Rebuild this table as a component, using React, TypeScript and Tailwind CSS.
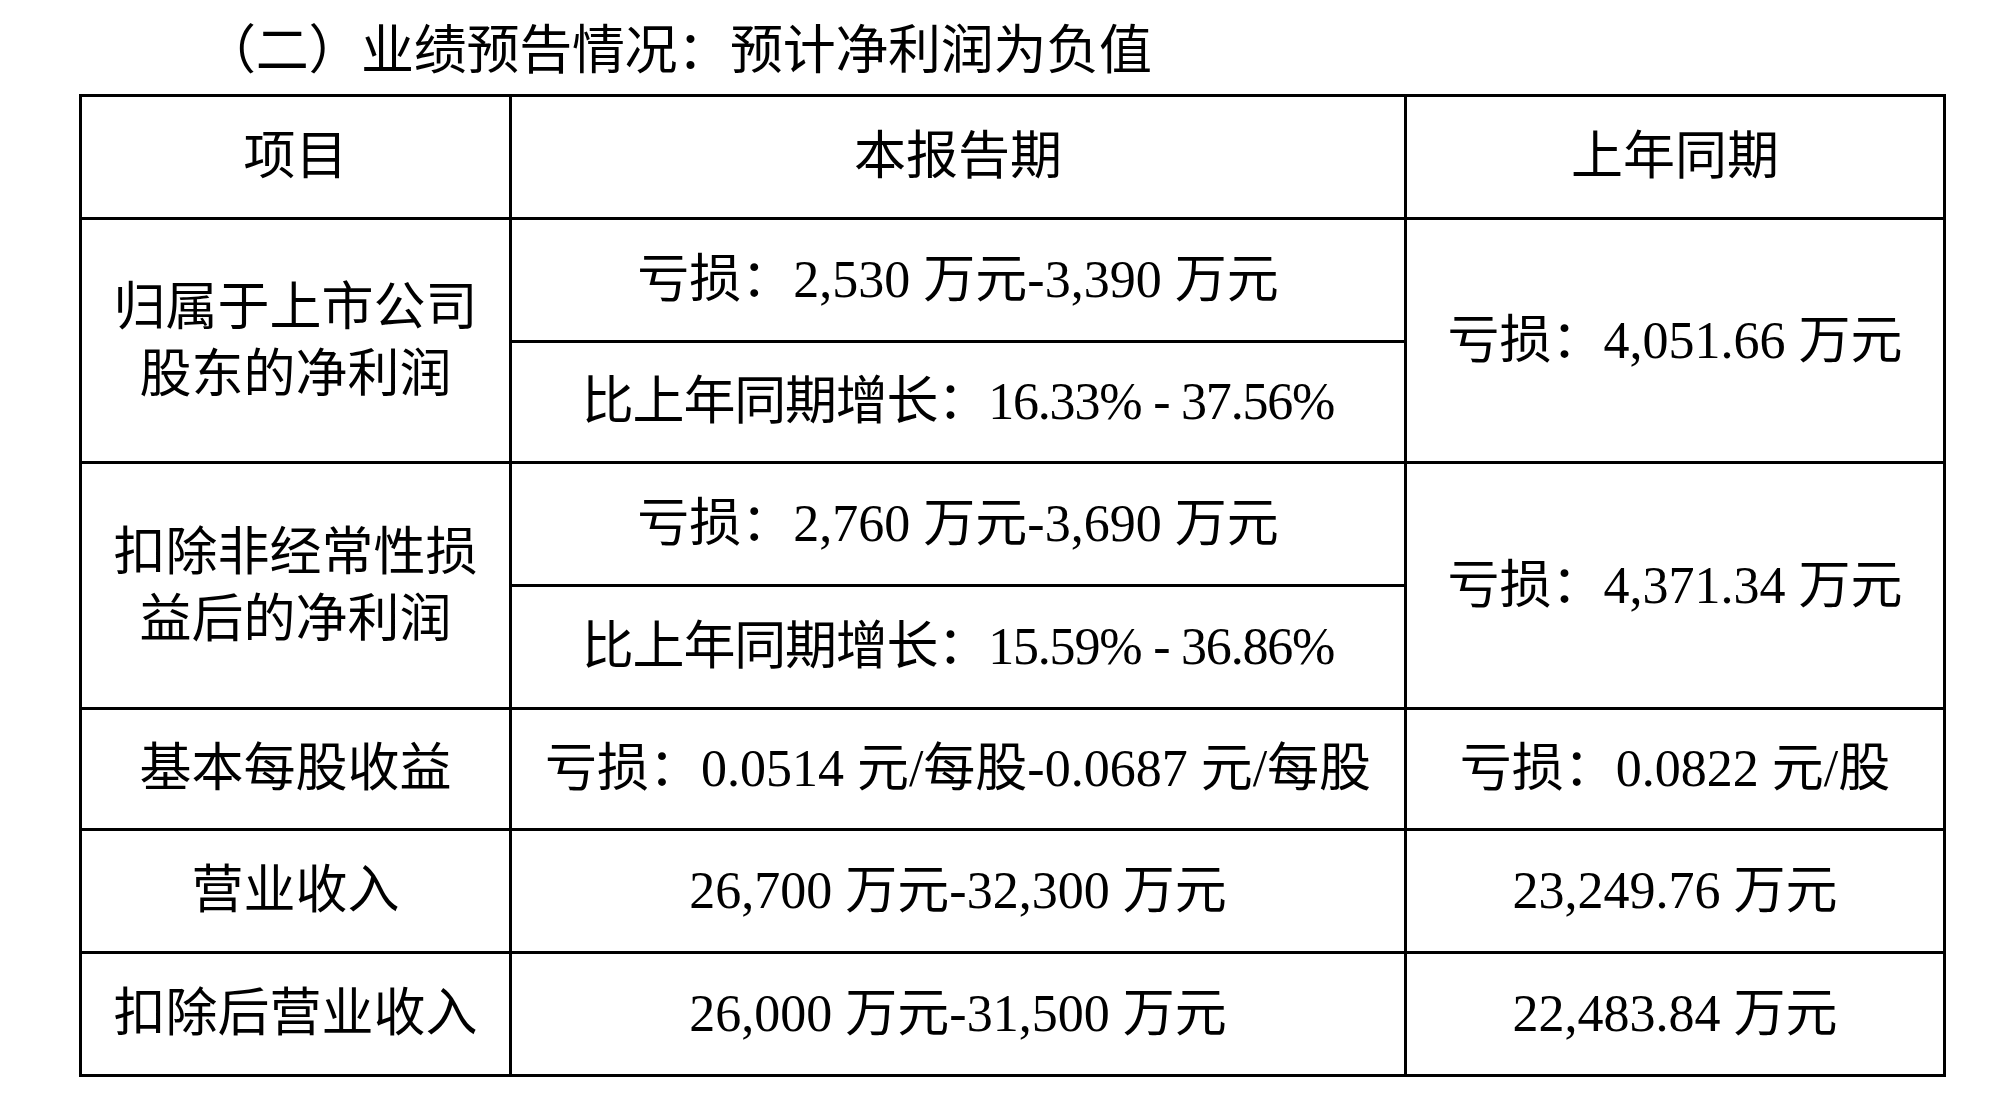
export default function App() {
  const cell = 'border-[3px] border-black text-center align-middle p-0'
  return (
    <div className="min-h-screen bg-white text-black font-['Liberation_Serif','Noto_Sans_CJK_SC',serif] text-[52px] leading-none">
      <div className="h-[94px] pl-[203px] pt-[8px] flex items-center text-[53px] tracking-[-0.3px]">
        （二）业绩预告情况：预计净利润为负值
      </div>
      <table className="ml-[79px] border-collapse table-fixed w-[1864px]">
        <colgroup>
          <col className="w-[430px]" />
          <col className="w-[895px]" />
          <col className="w-[539px]" />
        </colgroup>
        <tbody>
          <tr className="h-[123px]">
            <td className={cell}>项目</td>
            <td className={cell}>本报告期</td>
            <td className={cell}>上年同期</td>
          </tr>
          <tr className="h-[123px]">
            <td rowSpan={2} className={`${cell} leading-[67px]`}>
              <div>归属于上市公司</div>
              <div>股东的净利润</div>
            </td>
            <td className={cell}>亏损：2,530 万元-3,390 万元</td>
            <td rowSpan={2} className={cell}>亏损：4,051.66 万元</td>
          </tr>
          <tr className="h-[121px]">
            <td className={`${cell} tracking-[-1.2px]`}>比上年同期增长：16.33% - 37.56%</td>
          </tr>
          <tr className="h-[123px]">
            <td rowSpan={2} className={`${cell} leading-[67px]`}>
              <div>扣除非经常性损</div>
              <div>益后的净利润</div>
            </td>
            <td className={cell}>亏损：2,760 万元-3,690 万元</td>
            <td rowSpan={2} className={cell}>亏损：4,371.34 万元</td>
          </tr>
          <tr className="h-[123px]">
            <td className={`${cell} tracking-[-1.2px]`}>比上年同期增长：15.59% - 36.86%</td>
          </tr>
          <tr className="h-[121px]">
            <td className={cell}>基本每股收益</td>
            <td className={cell}>亏损：0.0514 元/每股-0.0687 元/每股</td>
            <td className={cell}>亏损：0.0822 元/股</td>
          </tr>
          <tr className="h-[123px]">
            <td className={cell}>营业收入</td>
            <td className={cell}>26,700 万元-32,300 万元</td>
            <td className={cell}>23,249.76 万元</td>
          </tr>
          <tr className="h-[123px]">
            <td className={cell}>扣除后营业收入</td>
            <td className={cell}>26,000 万元-31,500 万元</td>
            <td className={cell}>22,483.84 万元</td>
          </tr>
        </tbody>
      </table>
    </div>
  )
}
